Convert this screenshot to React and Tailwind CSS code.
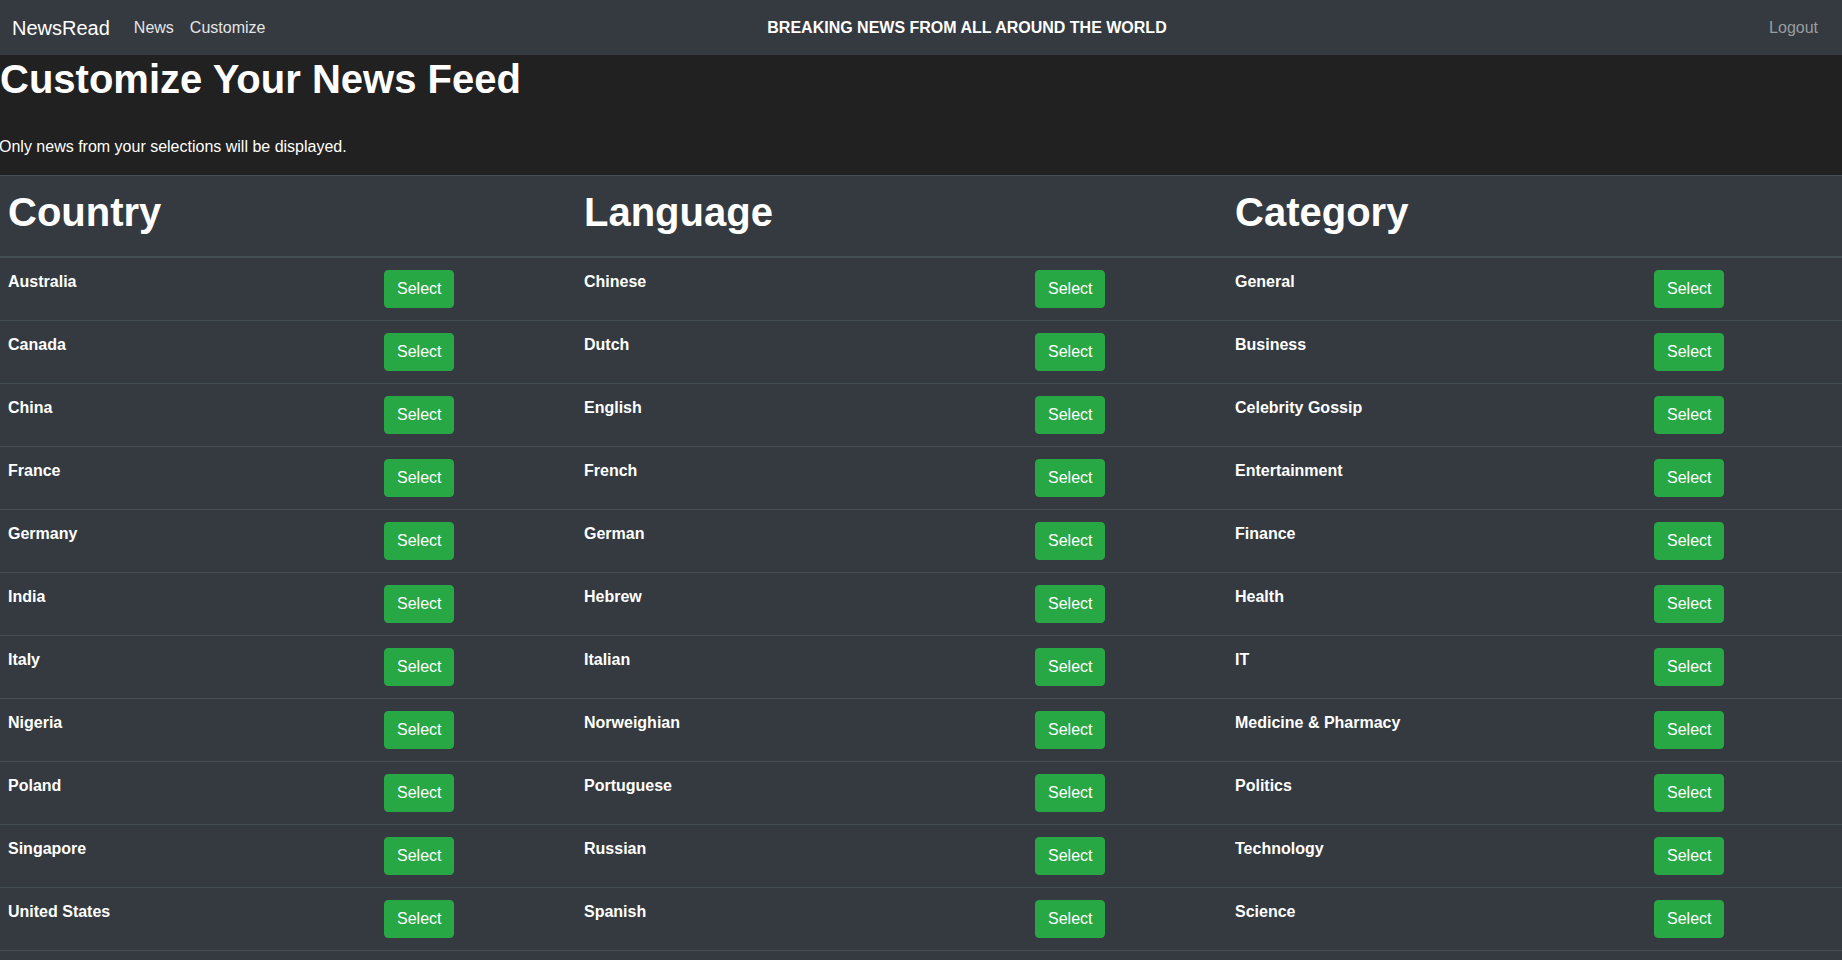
const countries = ["Australia", "Canada", "China", "France", "Germany", "India", "Italy", "Nigeria", "Poland", "Singapore", "United States"];
const languages = ["Chinese", "Dutch", "English", "French", "German", "Hebrew", "Italian", "Norweighian", "Portuguese", "Russian", "Spanish"];
const categories = ["General", "Business", "Celebrity Gossip", "Entertainment", "Finance", "Health", "IT", "Medicine & Pharmacy", "Politics", "Technology", "Science"];

function SelectButton() {
  return (
    <button type="button" className="rounded-[4px] border border-[#28a745] bg-[#28a745] px-3 py-1.5 text-base leading-6 text-white">
      Select
    </button>
  );
}

function Navbar() {
  return (
    <nav className="flex h-[55px] items-center bg-[#343a40] pr-4 pl-3">
      <div className="flex flex-1 items-center">
        <a className="mr-4 py-[5px] text-xl leading-[30px] text-white">NewsRead</a>
        <a className="px-2 leading-6 text-[#e4e5e6]">News</a>
        <a className="px-2 leading-6 text-[#e4e5e6]">Customize</a>
      </div>
      <div className="ml-[96px] font-bold leading-6 text-white">BREAKING NEWS FROM ALL AROUND THE WORLD</div>
      <div className="flex flex-1 justify-end">
        <a className="px-2 leading-6 text-[#9a9da0]">Logout</a>
      </div>
    </nav>
  );
}

export default function App() {
  const rows = countries.map((country, i) => [country, languages[i], categories[i]]);

  return (
    <div className="min-h-screen bg-[#343a40] font-['Liberation_Sans',Arial,sans-serif] text-white">
      <Navbar />
      <header className="border-b border-[#454d55] bg-[#212121]">
        <h1 className="text-[40px] font-bold leading-[48px]">Customize Your News Feed</h1>
        <p className="mt-8 mb-4 -ml-px leading-6">Only news from your selections will be displayed.</p>
      </header>
      <div className="grid grid-cols-[372px_200px_451px_200px_419px_200px] border-b border-[#454d55]">
        <div className="col-span-2 border-b-2 border-[#454d55] px-2 pt-3 pb-5">
          <h2 className="text-[40px] font-bold leading-[48px]">Country</h2>
        </div>
        <div className="col-span-2 border-b-2 border-[#454d55] px-3 pt-3 pb-5">
          <h2 className="text-[40px] font-bold leading-[48px]">Language</h2>
        </div>
        <div className="col-span-2 border-b-2 border-[#454d55] px-3 pt-3 pb-5">
          <h2 className="text-[40px] font-bold leading-[48px]">Category</h2>
        </div>
        {rows.map((row, i) => (
          <div key={row[0]} className={`col-span-6 grid grid-cols-subgrid ${i > 0 ? "border-t border-[#454d55]" : ""}`}>
            <div className="px-2 py-3 font-bold leading-6">{row[0]}</div>
            <div className="p-3"><SelectButton /></div>
            <div className="p-3 font-bold leading-6">{row[1]}</div>
            <div className="p-3"><SelectButton /></div>
            <div className="p-3 font-bold leading-6">{row[2]}</div>
            <div className="p-3"><SelectButton /></div>
          </div>
        ))}
      </div>
    </div>
  );
}
